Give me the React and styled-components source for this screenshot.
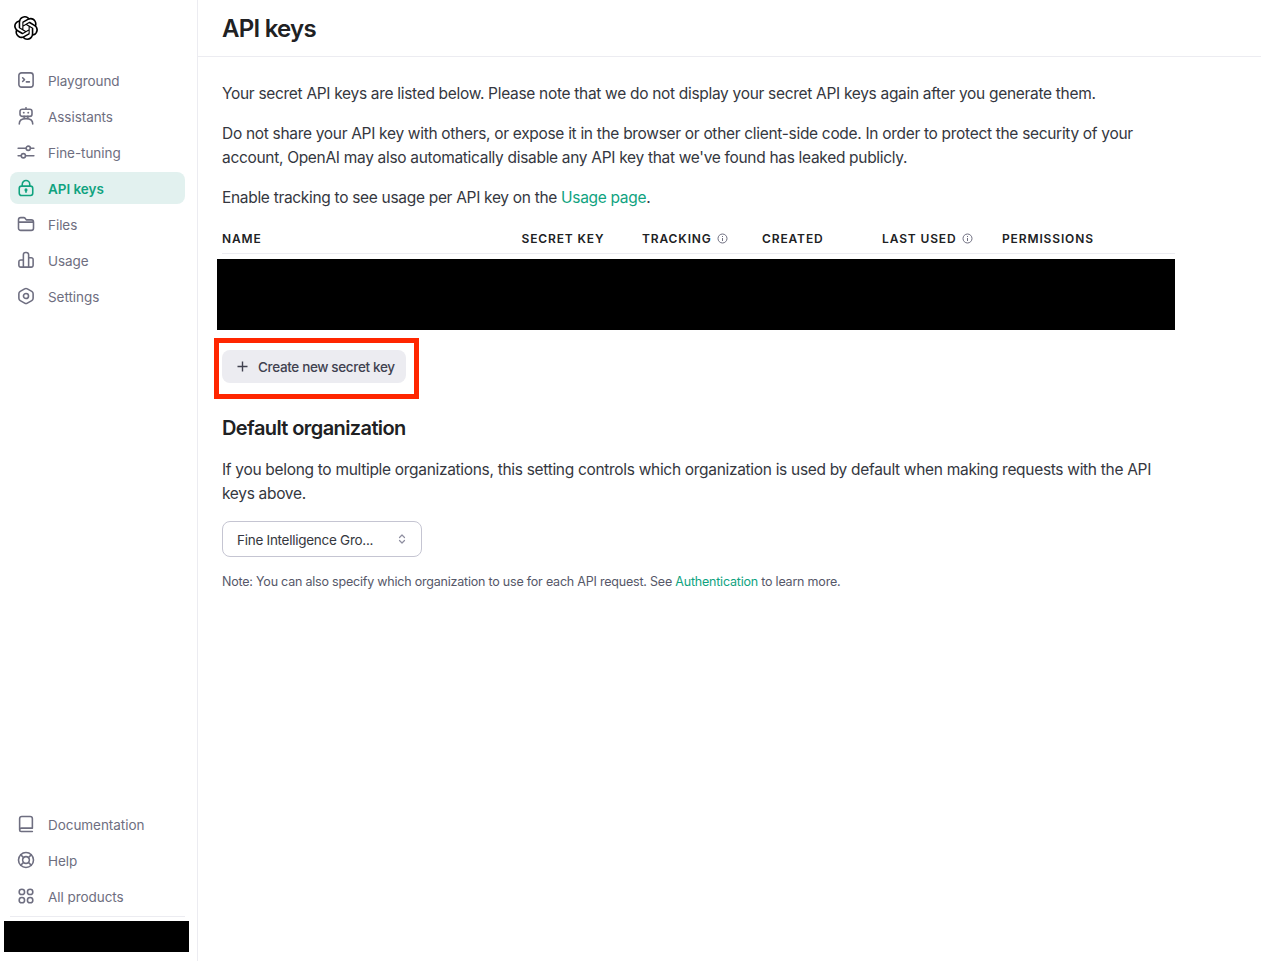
import React from 'react';
import styled, { createGlobalStyle } from 'styled-components';
import { SiOpenai } from 'react-icons/si';

const GlobalStyle = createGlobalStyle`
  html, body {
    margin: 0;
    padding: 0;
    background: #fff;
  }
  body {
    font-family: Inter, "Liberation Sans", sans-serif;
    color: #202123;
  }
`;

const Layout = styled.div`
  display: flex;
  width: 1261px;
  height: 961px;
  overflow: hidden;
`;

const Sidebar = styled.aside`
  display: flex;
  flex-direction: column;
  box-sizing: border-box;
  width: 198px;
  flex-shrink: 0;
  border-right: 1px solid #ececf1;
  padding: 0 12px 0 10px;
`;

const LogoWrap = styled.div`
  display: flex;
  height: 56px;
  align-items: center;
  padding-left: 4px;
  margin-bottom: 8px;
  color: #000;
`;

const NavList = styled.nav`
  display: flex;
  flex-direction: column;
  gap: 4px;
`;

const NavItem = styled.a`
  display: flex;
  align-items: center;
  gap: 13px;
  height: 32px;
  padding-left: 7px;
  border-radius: 8px;
  font-size: 13.5px;
  letter-spacing: -0.05px;
  font-weight: ${(p) => (p.$active ? 600 : 400)};
  color: ${(p) => (p.$active ? '#10a37f' : '#6e6e80')};
  background: ${(p) => (p.$active ? '#e2f1ef' : 'transparent')};
`;

const NavLabel = styled.span`
  padding-top: 2px;
`;

const IconSvg = styled.svg`
  width: 18px;
  height: 18px;
  flex-shrink: 0;
  fill: none;
  stroke: currentColor;
  stroke-width: 2.1;
  stroke-linecap: round;
  stroke-linejoin: round;
`;

const Spacer = styled.div`
  flex: 1;
`;

const SideDivider = styled.div`
  height: 1px;
  background: #ececf1;
  margin-top: 4px;
`;

const AccountBlock = styled.div`
  height: 31px;
  margin: 4px -4px 9px -6px;
  background: #000;
`;

const Main = styled.main`
  flex: 1;
  min-width: 0;
`;

const Header = styled.header`
  box-sizing: border-box;
  height: 57px;
  display: flex;
  align-items: center;
  padding: 2px 0 0 24px;
  border-bottom: 1px solid #ececf1;
`;

const Title = styled.h1`
  margin: 0;
  font-size: 24px;
  line-height: 32px;
  font-weight: 600;
  letter-spacing: -0.75px;
  color: #202123;
`;

const Content = styled.div`
  width: 953px;
  padding: 25px 0 0 24px;
`;

const Para = styled.p`
  margin: 0 0 16px;
  font-size: 15.5px;
  line-height: 24px;
  letter-spacing: -0.31px;
  color: #353740;
`;

const GreenLink = styled.a`
  color: #10a37f;
`;

const KeyTable = styled.div`
  margin-top: -2px;
`;

const HeadRow = styled.div`
  display: grid;
  grid-template-columns: 299.5px 120.5px 120px 120px 120px 1fr;
  height: 29px;
  align-items: center;
  border-bottom: 1px solid #ececf1;
`;

const HeadCell = styled.div`
  display: flex;
  align-items: center;
  gap: 5px;
  font-size: 12px;
  font-weight: 600;
  letter-spacing: 0.87px;
  color: #202123;
`;

const InfoSvg = styled.svg`
  width: 11px;
  height: 11px;
  fill: none;
  stroke: #6e6e80;
  stroke-width: 1;
`;

const RedactedRows = styled.div`
  width: 958px;
  height: 71px;
  margin: 5px 0 0 -5px;
  background: #000;
`;

const Highlight = styled.div`
  box-sizing: border-box;
  width: 205px;
  height: 61px;
  margin: 8px 0 0 -8px;
  padding: 7px 0 0 3px;
  border: 5px solid #ff2600;
`;

const CreateButton = styled.button`
  display: flex;
  align-items: center;
  gap: 9px;
  box-sizing: border-box;
  width: 184px;
  height: 33px;
  padding: 0 0 0 14px;
  border: 0;
  border-radius: 8px;
  background: #ececf1;
  color: #40414f;
  font-family: inherit;
  font-size: 13.5px;
  font-weight: 500;
  letter-spacing: -0.35px;
`;

const PlusSvg = styled.svg`
  width: 13px;
  height: 13px;
  fill: none;
  stroke: #40414f;
  stroke-width: 1.4;
`;

const SectionTitle = styled.h2`
  margin: 15px 0 16px;
  font-size: 20px;
  line-height: 28px;
  font-weight: 600;
  letter-spacing: -0.6px;
  color: #202123;
`;

const OrgSelect = styled.div`
  display: flex;
  align-items: center;
  justify-content: space-between;
  box-sizing: border-box;
  width: 200px;
  height: 36px;
  padding: 0 13px 0 14px;
  margin-top: -1px;
  border: 1px solid #c5c5d2;
  border-radius: 8px;
  font-size: 13.5px;
  letter-spacing: -0.27px;
  color: #353740;
`;

const OrgName = styled.span`
  padding-top: 2px;
`;

const ChevronSvg = styled.svg`
  width: 12px;
  height: 12px;
  margin-top: -1px;
  fill: none;
  stroke: #8e8ea0;
  stroke-width: 1.2;
  stroke-linecap: round;
  stroke-linejoin: round;
`;

const Note = styled.p`
  margin: 15px 0 0;
  font-size: 12.5px;
  line-height: 20px;
  letter-spacing: -0.21px;
  color: #565869;
`;

const icons = {
  playground: (
    <>
      <rect x="2.5" y="2.5" width="19" height="19" rx="3.5" />
      <path d="M7.5 9l2.5 2.5L7.5 14M12.5 14.500h4" />
    </>
  ),
  assistants: (
    <>
      <rect x="4" y="3" width="16" height="9.500" rx="3" />
      <path d="M12 1v1" />
      <path d="M9 7.500h.01M15 7.500h.01" strokeWidth="2.600" />
      <path d="M9.500 12.500v3M14.500 12.500v3M3 22.500c0-4.500 3.500-7 9-7s9 2.500 9 7" />
    </>
  ),
  tuning: (
    <>
      <path d="M1.500 7H12M18 7h4.500M1.500 17h4M11.500 17h11" />
      <circle cx="15" cy="7" r="2.800" />
      <circle cx="8.500" cy="17" r="2.800" />
    </>
  ),
  lock: (
    <>
      <rect x="3" y="9.500" width="18" height="12.500" rx="3" />
      <path d="M7 9.500V7a5 5 0 0 1 10 0v2.500" />
      <circle cx="12" cy="14.500" r="1" />
      <path d="M12 15v2.500" />
    </>
  ),
  folder: (
    <path d="M2 9.500v-3a3 3 0 0 1 3-3h4.200a2 2 0 0 1 1.600.8l1.600 2.200H19a3 3 0 0 1 3 3v8a3 3 0 0 1-3 3H5a3 3 0 0 1-3-3v-8zM2 9.500h20" />
  ),
  usage: (
    <path d="M8.500 21.500H5A2.500 2.500 0 0 1 2.500 19v-4.500A2.500 2.500 0 0 1 5 12h3.500M8.500 21.500V5a3 3 0 0 1 3-3h1a3 3 0 0 1 3 3v16.500M15.500 9H19a2.500 2.500 0 0 1 2.500 2.500V19a2.500 2.500 0 0 1-2.500 2.500H8.500" />
  ),
  settings: (
    <>
      <path d="M10.200 2.500a3.600 3.600 0 0 1 3.600 0l5.900 3.400a3.600 3.600 0 0 1 1.800 3.100v6a3.600 3.600 0 0 1-1.800 3.100l-5.900 3.400a3.600 3.600 0 0 1-3.600 0l-5.900-3.400a3.600 3.600 0 0 1-1.800-3.100V9a3.600 3.600 0 0 1 1.800-3.100z" />
      <circle cx="12" cy="12" r="3.400" />
    </>
  ),
  book: (
    <path d="M3.500 19.500V5a3 3 0 0 1 3-3h11a3 3 0 0 1 3 3v12.500H6a2.500 2.500 0 0 0-2.500 2.500 2 2 0 0 0 2 2h15" />
  ),
  help: (
    <>
      <circle cx="12" cy="12" r="10" />
      <circle cx="12" cy="12" r="4.500" />
      <path d="M4.930 4.930l3.900 3.900M19.070 4.930l-3.900 3.900M4.930 19.070l3.900-3.900M19.070 19.070l-3.900-3.900" />
    </>
  ),
  products: (
    <>
      <circle cx="6.500" cy="6.500" r="3.600" />
      <circle cx="17.500" cy="6.500" r="3.600" />
      <circle cx="6.500" cy="17.500" r="3.600" />
      <circle cx="17.500" cy="17.500" r="3.600" />
    </>
  ),
};

const topNav = [
  { label: 'Playground', icon: 'playground' },
  { label: 'Assistants', icon: 'assistants' },
  { label: 'Fine-tuning', icon: 'tuning' },
  { label: 'API keys', icon: 'lock', active: true },
  { label: 'Files', icon: 'folder' },
  { label: 'Usage', icon: 'usage' },
  { label: 'Settings', icon: 'settings' },
];

const bottomNav = [
  { label: 'Documentation', icon: 'book' },
  { label: 'Help', icon: 'help' },
  { label: 'All products', icon: 'products' },
];

const columns = [
  { label: 'NAME' },
  { label: 'SECRET KEY' },
  { label: 'TRACKING', info: true },
  { label: 'CREATED' },
  { label: 'LAST USED', info: true },
  { label: 'PERMISSIONS' },
];

function NavEntry({ item }) {
  return (
    <NavItem $active={item.active}>
      <IconSvg viewBox="0 0 24 24">{icons[item.icon]}</IconSvg>
      <NavLabel>{item.label}</NavLabel>
    </NavItem>
  );
}

export default function App() {
  return (
    <Layout>
      <GlobalStyle />
      <Sidebar>
        <LogoWrap>
          <SiOpenai size={24} />
        </LogoWrap>
        <NavList>
          {topNav.map((item) => (
            <NavEntry key={item.label} item={item} />
          ))}
        </NavList>
        <Spacer />
        <NavList>
          {bottomNav.map((item) => (
            <NavEntry key={item.label} item={item} />
          ))}
        </NavList>
        <SideDivider />
        <AccountBlock />
      </Sidebar>
      <Main>
        <Header>
          <Title>API keys</Title>
        </Header>
        <Content>
          <Para>
            Your secret API keys are listed below. Please note that we do not display your secret API keys again
            after you generate them.
          </Para>
          <Para>
            Do not share your API key with others, or expose it in the browser or other client-side code. In order
            to protect the security of your account, OpenAI may also automatically disable any API key that we've
            found has leaked publicly.
          </Para>
          <Para>
            Enable tracking to see usage per API key on the <GreenLink>Usage page</GreenLink>.
          </Para>
          <KeyTable>
            <HeadRow>
              {columns.map((col) => (
                <HeadCell key={col.label}>
                  {col.label}
                  {col.info && (
                    <InfoSvg viewBox="0 0 11 11">
                      <circle cx="5.5" cy="5.5" r="4.5" />
                      <path d="M5.5 5v3M5.5 3v1" />
                    </InfoSvg>
                  )}
                </HeadCell>
              ))}
            </HeadRow>
            <RedactedRows />
          </KeyTable>
          <Highlight>
            <CreateButton>
              <PlusSvg viewBox="0 0 13 13">
                <path d="M6.5 1.5v10M1.5 6.5h10" />
              </PlusSvg>
              Create new secret key
            </CreateButton>
          </Highlight>
          <SectionTitle>Default organization</SectionTitle>
          <Para>
            If you belong to multiple organizations, this setting controls which organization is used by default
            when making requests with the API keys above.
          </Para>
          <OrgSelect>
            <OrgName>Fine Intelligence Gro...</OrgName>
            <ChevronSvg viewBox="0 0 12 12">
              <path d="M3.5 4.5L6 2l2.500 2.500M3.500 7.500L6 10l2.500-2.500" />
            </ChevronSvg>
          </OrgSelect>
          <Note>
            Note: You can also specify which organization to use for each API request. See{' '}
            <GreenLink>Authentication</GreenLink> to learn more.
          </Note>
        </Content>
      </Main>
    </Layout>
  );
}
